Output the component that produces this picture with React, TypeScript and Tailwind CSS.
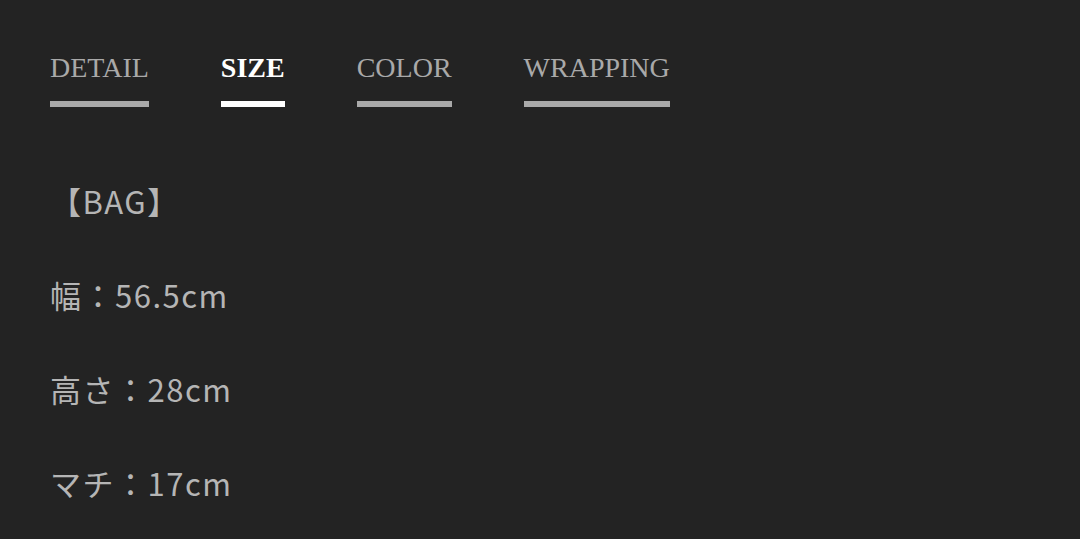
export default function App() {
  const tabs = [
    { label: "DETAIL", active: false },
    { label: "SIZE", active: true },
    { label: "COLOR", active: false },
    { label: "WRAPPING", active: false },
  ];
  const lines = ["【BAG】", "幅：56.5cm", "高さ：28cm", "マチ：17cm"];

  return (
    <div className="h-[539px] w-full overflow-hidden bg-[#232323] px-[50px]">
      {/* Tabs */}
      <div className="flex gap-[72px] pt-[50px]">
        {tabs.map((t) => (
          <div
            key={t.label}
            className={`flex flex-col ${t.active ? "text-white font-bold" : "text-[#a9a9a9]"}`}
          >
            <span className="font-['Liberation_Serif',serif] text-[28px] leading-[36px]">
              {t.label}
            </span>
            <span
              className={`mt-[15px] h-[6px] ${t.active ? "bg-white" : "bg-[#a9a9a9]"}`}
            />
          </div>
        ))}
      </div>

      {/* Size list */}
      <div className="mt-[47px] flex flex-col font-['Noto_Sans_CJK_JP',sans-serif] text-[31px] tracking-[1.5px] leading-[94px] text-[#b5b5b5]">
        {lines.map((l) => (
          <p key={l}>{l}</p>
        ))}
      </div>
    </div>
  );
}
